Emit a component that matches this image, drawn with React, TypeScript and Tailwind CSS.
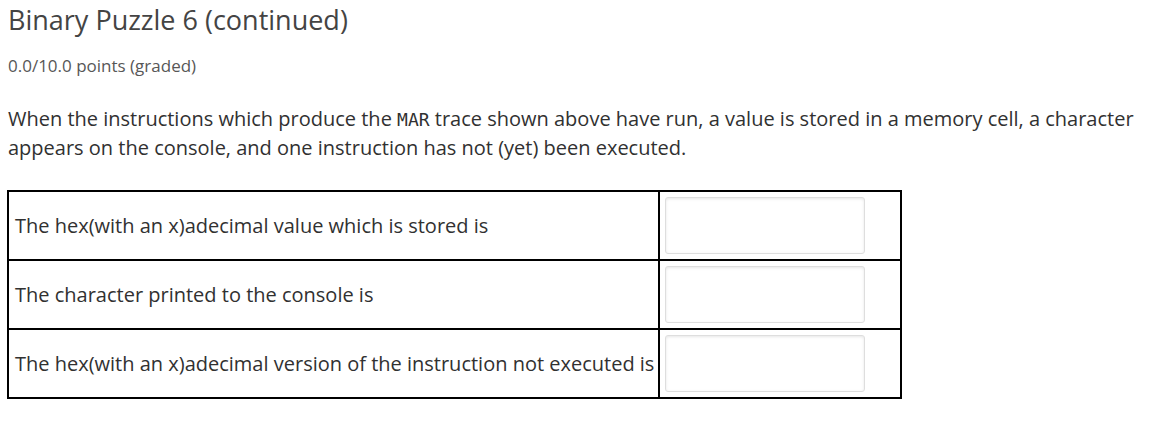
export default function App() {
  const rows = [
    "The hex(with an x)adecimal value which is stored is",
    "The character printed to the console is",
    "The hex(with an x)adecimal version of the instruction not executed is",
  ];
  return (
    <div className="bg-white w-[1164px] h-[422px] px-2 pt-[4px] text-[#313131]" style={{ fontFamily: '"Open Sans", sans-serif' }}>
      <h2 className="text-[27px] leading-[32px] text-[#444] font-normal">Binary Puzzle 6 (continued)</h2>
      <div className="mt-[19px] text-[17px] leading-[22px] text-[#575757]">0.0/10.0 points (graded)</div>
      <p className="mt-[27px] text-[20px] leading-[29px] text-[#313131] w-[1140px]">
        When the instructions which produce the{" "}
        <code className="text-[18px] leading-none" style={{ fontFamily: '"DejaVu Sans Mono", monospace' }}>MAR</code>{" "}
        trace shown above have run, a value is stored in a memory cell, a character appears on the console, and one instruction has not (yet) been executed.
      </p>
      <table className="mt-[28px] -ml-[1px] border-collapse border-2 border-black">
        <tbody>
          {rows.map((r, i) => (
            <tr key={i}>
              <td className="border-2 border-black pl-[6px] pr-[2px] w-[651px] h-[69px] text-[20px] whitespace-nowrap">{r}</td>
              <td className="border-2 border-black pl-[5px] pr-[35px] py-[5px]">
                <input type="text" className="block w-[200px] h-[57px] rounded-[3px] border border-[#dedede] bg-white shadow-[inset_0_1px_3px_rgba(0,0,0,0.1)] outline-none" />
              </td>
            </tr>
          ))}
        </tbody>
      </table>
    </div>
  );
}
